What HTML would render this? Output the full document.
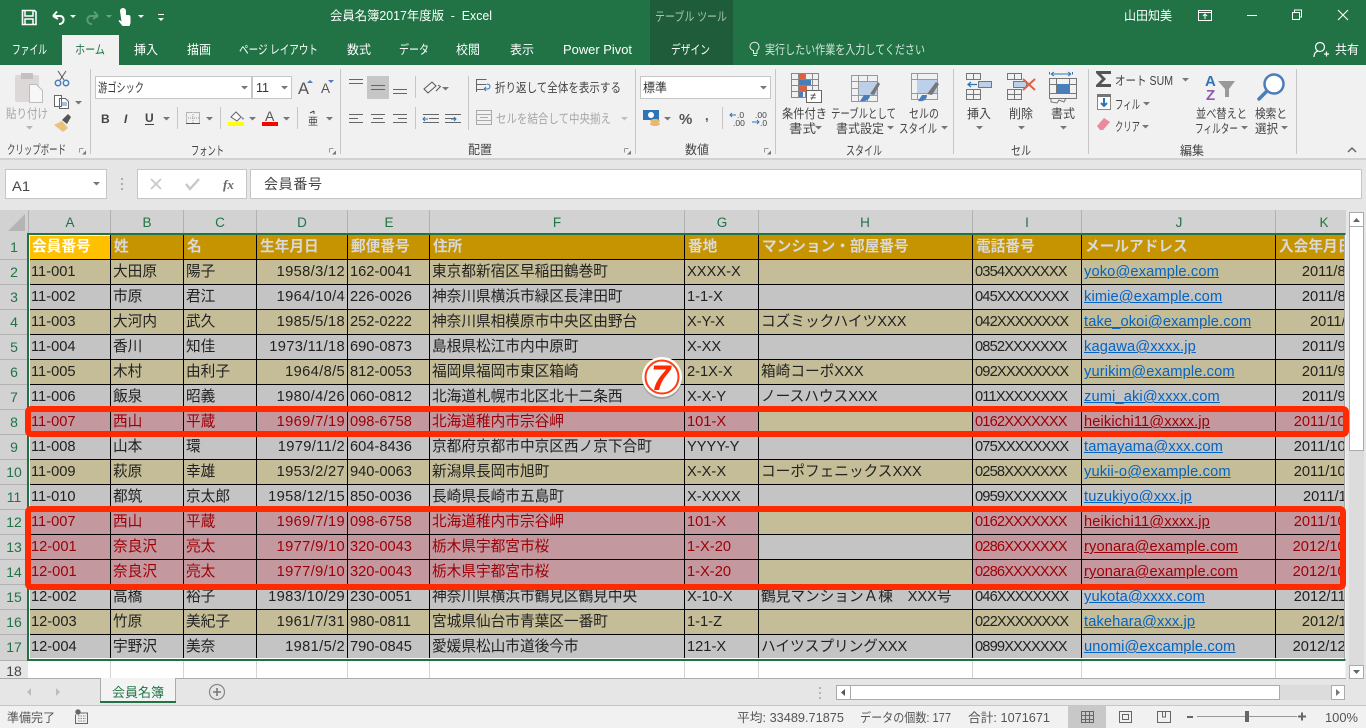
<!DOCTYPE html>
<html lang="ja"><head><meta charset="utf-8"><title>会員名簿2017年度版 - Excel</title>
<style>
html,body{margin:0;padding:0;width:1366px;height:728px;overflow:hidden;background:#f1f1f1}
svg{position:absolute;left:0;top:0;display:block}
svg text{font-family:"Liberation Sans","Noto Sans CJK JP",sans-serif;font-size:12.5px;fill:#444;white-space:pre}
.w text{fill:#fff}
.dis{fill:#a6a6a6 !important}
table{position:absolute;left:29px;top:235px;border-collapse:separate;border-spacing:0;table-layout:fixed;width:1316px;font-family:"Liberation Sans","Noto Sans CJK JP",sans-serif;font-size:14.67px;color:#222}
td{height:23px;padding:1px 0 0 2px;border-right:1px solid #000;border-bottom:1px solid #000;box-sizing:content-box;overflow:hidden;white-space:nowrap;line-height:23px;background:#c4c4c4}
tr.t td{background:#c4bd97}
tr.h td{background:#c69400;color:#d9d9d9;font-weight:bold;height:24px;line-height:24px;padding:0 0 0 3px}
tr.h td.a{background:#ffc000;color:#fff;box-shadow:inset 1px 1px 0 #fff}
tr.r td{background:#c4989f;color:#9c0006}
tr.r td.n{background:#c4c4c4}
tr.r.t td.n{background:#c4bd97}
td.d{text-align:right;padding:1px 2px 0 0;letter-spacing:.35px}
td.i{letter-spacing:-.85px;padding-left:2px}
td.m{letter-spacing:.12px;padding-left:2px}
td.m span{color:#0563c1;text-decoration:underline}
tr.r td.m span{color:#9c0006}
td.k{border-right:0;padding:1px 0 0 0}
td.k div{width:90px;text-align:right;letter-spacing:0}
tr.last td{border-bottom:0;height:22px;line-height:23px}
</style></head><body>
<svg width="1366" height="728" viewBox="0 0 1366 728">
<defs>
<path id="dd" d="M0 0h7l-3.500 3.500z" fill="#777"/>
<path id="dw" d="M0 0h6l-3 3z" fill="#fff"/>
<g id="lc"><path d="M.5 .5h4M.5 .5v4" stroke="#999" fill="none"/><path d="M3 6.500h4v-4z" fill="#777"/></g>
</defs>
<!-- title bar -->
<rect width="1366" height="65" fill="#217346"/>
<rect x="650" width="83" height="65" fill="#1e5c3a"/>
<rect x="62" y="35" width="57" height="30" fill="#f1f1f1"/>
<!-- ribbon -->
<rect y="65" width="1366" height="93" fill="#f1f1f1"/>
<rect y="158" width="1366" height="2" fill="#d2d2d2"/>
<rect y="160" width="1366" height="50" fill="#e6e6e6"/>
<!-- QAT -->
<g fill="none" stroke="#fff">
<path d="M22.500 10.500h12l1.500 1.500v12.500h-13.500z" stroke-width="1.600"/>
<path d="M25 11v5h8v-5M25 24v-5h8v5" stroke-width="1.500"/>
<path d="M53 16l4-4.500M53 16l5 3M53 16h7c5 0 5 8-1 8" stroke-width="2"/>
<path d="M98 16l-4-4.500M98 16l-5 3M98 16h-7c-5 0-5 8 1 8" stroke-width="2" stroke="#5f9b7b"/>
</g>
<path d="M120 11a3 3 0 0 1 6 0v4h2.500a2 2 0 0 1 2 2v6l-1 3h-7l-4-5 1-1 2 1.500z" fill="#fff"/>
<use href="#dw" x="70" y="15"/><use href="#dw" x="106" y="15" opacity=".35"/><use href="#dw" x="138" y="15"/>
<rect x="158" y="14" width="6" height="1" fill="#fff"/><use href="#dw" x="158" y="18"/>
<g class="w">
<text x="330" y="20" textLength="162" lengthAdjust="spacingAndGlyphs">会員名簿2017年度版  -  Excel</text>
<text x="1124" y="20" textLength="48" lengthAdjust="spacingAndGlyphs">山田知美</text>
<text x="12" y="54" textLength="35" lengthAdjust="spacingAndGlyphs">ファイル</text>
<text x="134" y="54" textLength="24" lengthAdjust="spacingAndGlyphs">挿入</text>
<text x="187" y="54" textLength="24" lengthAdjust="spacingAndGlyphs">描画</text>
<text x="239" y="54" textLength="79" lengthAdjust="spacingAndGlyphs">ページ レイアウト</text>
<text x="347" y="54" textLength="24" lengthAdjust="spacingAndGlyphs">数式</text>
<text x="399" y="54" textLength="30" lengthAdjust="spacingAndGlyphs">データ</text>
<text x="456" y="54" textLength="24" lengthAdjust="spacingAndGlyphs">校閲</text>
<text x="510" y="54" textLength="24" lengthAdjust="spacingAndGlyphs">表示</text>
<text x="563" y="54" textLength="69" lengthAdjust="spacingAndGlyphs">Power Pivot</text>
<text x="671" y="54" textLength="39" lengthAdjust="spacingAndGlyphs">デザイン</text>
<text x="765" y="54" textLength="160" lengthAdjust="spacingAndGlyphs" style="fill:#d5e5db">実行したい作業を入力してください</text>
<text x="1335" y="54" textLength="24" lengthAdjust="spacingAndGlyphs">共有</text>
<text x="655" y="21" textLength="72" lengthAdjust="spacingAndGlyphs" style="fill:#a9c6b5">テーブル ツール</text>
</g>
<text x="75" y="54" textLength="30" lengthAdjust="spacingAndGlyphs" style="fill:#217346">ホーム</text>
<!-- window controls -->
<g fill="none" stroke="#fff">
<path d="M1198.500 10.500h13v10h-13zM1198.500 12.500h13M1205 19v-5M1203 16l2-2 2 2"/>
<path d="M1247 15.500h10"/>
<path d="M1292.500 12.500h7v7h-7zM1294.500 12v-2h7v7h-2"/>
<path d="M1338 10l10 10M1348 10l-10 10" stroke-width="1.100"/>
<path d="M748 49a4.500 4.500 0 1 1 7 3.500v3h-3.500v-3a4.500 4.500 0 0 1-3.500-3.500zM751.500 57.500h3.500" stroke="#e8f0eb" transform="translate(2 -2)"/>
<circle cx="1320" cy="47" r="4.500" stroke-width="1.200"/><path d="M1314 57c0-4 2-5.500 4-6M1324 54h5M1326.500 51.500v5" stroke-width="1.200"/>
</g>
<!-- separators -->
<g fill="#c6c6c6">
<rect x="90" y="69" width="1" height="85"/><rect x="340" y="69" width="1" height="85"/><rect x="635" y="69" width="1" height="85"/><rect x="775" y="69" width="1" height="85"/><rect x="953" y="69" width="1" height="85"/><rect x="1088" y="69" width="1" height="85"/><rect x="1296" y="69" width="1" height="85"/>
<rect x="177" y="107" width="1" height="22"/><rect x="220" y="107" width="1" height="22"/><rect x="297" y="107" width="1" height="22"/><rect x="415" y="76" width="1" height="22"/><rect x="415" y="107" width="1" height="22"/><rect x="468" y="76" width="1" height="54"/><rect x="722" y="107" width="1" height="22"/>
</g>
<!-- clipboard -->
<rect x="15" y="75" width="24" height="27" rx="2" fill="#dcd8d8"/><rect x="21" y="73" width="12" height="6" fill="#c4c0c0"/>
<path d="M29.500 84.500h7l6 6v12h-13z" fill="#f7f7f7" stroke="#bdbdbd"/>
<text x="6" y="118" textLength="42" lengthAdjust="spacingAndGlyphs" class="dis">貼り付け</text>
<use href="#dd" x="26" y="126" opacity=".5"/>
<g fill="none" stroke="#555"><path d="M58 71l6 9M66 71l-6 9"/></g><g fill="none" stroke="#4a7ebb" stroke-width="1.500"><circle cx="58" cy="83" r="2.700"/><circle cx="66" cy="83" r="2.700"/></g>
<path d="M54.500 95.500h7v11h-7zM59.500 98.500h6l3 3v7h-9z" fill="#fff" stroke="#666"/><path d="M61 103h6M61 105h6" stroke="#4a7ebb"/>
<use href="#dd" x="75" y="101"/>
<path d="M54 125l8-4 6 7-5 4z" fill="#eac27e"/><path d="M62 120l6-6 3 3-4 7z" fill="#555"/>
<text x="7" y="154" textLength="59" lengthAdjust="spacingAndGlyphs">クリップボード</text><use href="#lc" x="79" y="148"/>
<!-- font -->
<rect x="95.500" y="76.500" width="156" height="22" fill="#fff" stroke="#c6c6c6"/><rect x="252.500" y="76.500" width="39" height="22" fill="#fff" stroke="#c6c6c6"/>
<text x="98" y="92" textLength="46" lengthAdjust="spacingAndGlyphs" style="fill:#333">游ゴシック</text><use href="#dd" x="241" y="86"/>
<text x="256" y="92" textLength="13" lengthAdjust="spacingAndGlyphs" style="fill:#333">11</text><use href="#dd" x="281" y="86"/>
<text x="298" y="94" style="font-size:16.500px;fill:#555">A</text><path d="M307 83h6l-3-3z" fill="#4a7ebb"/>
<text x="321" y="93" style="font-size:13.500px;fill:#555">A</text><path d="M328 80h6l-3 3z" fill="#4a7ebb"/>
<text x="101" y="123" style="font-weight:bold;font-size:12px;fill:#444">B</text>
<text x="124" y="123" style="font-style:italic;font-weight:bold;font-size:12px;fill:#444">I</text>
<text x="145" y="122" style="font-weight:bold;font-size:12px;fill:#444">U</text><rect x="145" y="124" width="9" height="1" fill="#444"/>
<use href="#dd" x="163" y="117"/>
<path d="M186.500 112.500h13v11h-13z" fill="none" stroke="#777" stroke-dasharray="1 1"/><path d="M193 112v12M186 118h14" stroke="#999" stroke-dasharray="1 1"/><rect x="186" y="123" width="14" height="1" fill="#555"/><use href="#dd" x="206" y="117"/>
<path d="M231 117l5-5 5 5-4 4z" fill="#fff" stroke="#666"/><path d="M241 117l3 1-1 2z" fill="#4a7ebb"/><rect x="228" y="122" width="16" height="4" fill="#ff0"/><use href="#dd" x="249" y="117"/>
<text x="265" y="121" style="font-size:14px;fill:#555">A</text><rect x="262" y="122" width="16" height="4" fill="#f00"/><use href="#dd" x="283" y="117"/>
<text x="308" y="125" style="font-size:10px;fill:#444">亜</text><path d="M310 113l4-2M314 111v3" stroke="#444" fill="none"/><use href="#dd" x="326" y="117"/>
<text x="191" y="155" textLength="33" lengthAdjust="spacingAndGlyphs">フォント</text><use href="#lc" x="329" y="148"/>
<!-- alignment -->
<rect x="367" y="76" width="22" height="23" fill="#c6c6c6"/>
<path d="M349 79.500h14M349 83.500h14M371 85.500h14M371 89.500h14M393 89.500h14M393 93.500h14M349 114.500h14M349 118.500h9M349 122.500h14M371 114.500h14M373 118.500h10M371 122.500h14M393 114.500h14M398 118.500h9M393 122.500h14M423 114.500h16M429 118.500h10M423 122.500h16M445 114.500h16M445 118.500h10M445 122.500h16" stroke="#666" fill="none"/>
<path d="M428 119h-5M425 117l-2 2 2 2" stroke="#2e75b6" fill="none"/><path d="M451 119h5M454 117l2 2-2 2" stroke="#2e75b6" fill="none"/>
<g fill="none" stroke="#555"><path d="M424 89l8-7 4 4-8 7zM436 91l4-4M438 85l3 2"/></g><use href="#dd" x="442" y="87"/>
<path d="M476.500 79.500h10M476.500 84.500h10M476.500 89.500h7M476.500 79v13" stroke="#666" fill="none"/><path d="M487 84c4 0 4 5 0 5h-2M486 87l-2 2 2 2" stroke="#2e75b6" fill="none"/>
<text x="495" y="92" textLength="126" lengthAdjust="spacingAndGlyphs">折り返して全体を表示する</text>
<path d="M476.500 110.500h15v14h-15zM476.500 114.500h15M476.500 120.500h15M480 117.500h8" stroke="#aaa" fill="none"/>
<text x="496" y="123" textLength="115" lengthAdjust="spacingAndGlyphs" class="dis">セルを結合して中央揃え</text><use href="#dd" x="621" y="117" opacity=".4"/>
<text x="468" y="154" textLength="24" lengthAdjust="spacingAndGlyphs">配置</text><use href="#lc" x="624" y="148"/>
<!-- number -->
<rect x="640.500" y="76.500" width="130" height="22" fill="#fff" stroke="#c6c6c6"/><text x="643" y="92" textLength="24" lengthAdjust="spacingAndGlyphs" style="fill:#333">標準</text><use href="#dd" x="760" y="86"/>
<rect x="643" y="110" width="16" height="10" fill="#2e75b6"/><circle cx="651" cy="115" r="3" fill="#fff"/><ellipse cx="655" cy="121" rx="5" ry="2" fill="#e9b76d"/><ellipse cx="655" cy="124" rx="5" ry="2" fill="#e9b76d"/><use href="#dd" x="664" y="117"/>
<text x="679" y="124" style="font-size:15px;font-weight:bold;fill:#555">%</text>
<text x="705" y="120" style="font-size:13px;font-weight:bold;fill:#555">,</text>
<text x="737" y="118" style="font-size:8.500px;fill:#444">.0</text><text x="733" y="126" style="font-size:8.500px;fill:#444">.00</text><path d="M736 115h-6M732 113l-2 2 2 2" stroke="#2e75b6" fill="none"/>
<text x="755" y="118" style="font-size:8.500px;fill:#444">.00</text><text x="760" y="126" style="font-size:8.500px;fill:#444">.0</text><path d="M752 122h7M757 120l2 2-2 2" stroke="#2e75b6" fill="none"/>
<text x="685" y="154" textLength="24" lengthAdjust="spacingAndGlyphs">数値</text><use href="#lc" x="764" y="148"/>
<!-- styles -->
<g fill="none" stroke="#888"><path d="M791.500 73.500h27v24h-27zM791.500 79.500h27M791.500 85.500h27M791.500 91.500h27M798.500 73v24M805.500 73v24M812.500 73v24"/></g>
<rect x="799" y="74" width="6" height="5" fill="#dc6141"/><rect x="799" y="80" width="12" height="5" fill="#4a7ebb"/><rect x="799" y="86" width="8" height="5" fill="#dc6141"/><rect x="799" y="92" width="4" height="5" fill="#4a7ebb"/>
<rect x="806.500" y="90.500" width="15" height="12" fill="#fff" stroke="#666"/><text x="810" y="100" style="font-size:11px;fill:#333">≠</text>
<text x="782" y="118" textLength="45" lengthAdjust="spacingAndGlyphs">条件付き</text><text x="789" y="133" textLength="27" lengthAdjust="spacingAndGlyphs">書式</text><use href="#dd" x="815" y="126"/>
<g fill="none" stroke="#999"><path d="M851.500 75.500h26v26h-26zM851.500 81.500h26M851.500 88.500h26M851.500 95.500h26M858.500 75v26M867.500 75v26"/></g><rect x="859" y="82" width="18" height="13" fill="#bdd0e9"/>
<path d="M860 101l4-6 6 0c0 5-5 7-10 6z" fill="#4a7ebb"/><path d="M870 94l8-12 2 2-6 11z" fill="#777"/>
<text x="831" y="118" textLength="65" lengthAdjust="spacingAndGlyphs">テーブルとして</text><text x="836" y="133" textLength="48" lengthAdjust="spacingAndGlyphs">書式設定</text><use href="#dd" x="887" y="126"/>
<g fill="none" stroke="#999"><path d="M911.500 73.500h26v26h-26zM911.500 79.500h26M911.500 93.500h26M917.500 73v26"/></g><rect x="917" y="80" width="20" height="13" fill="#bdd0e9"/>
<path d="M918 101l4-6 5 0c0 5-4 7-9 6z" fill="#4a7ebb"/><path d="M927 94l9-12 3 2-7 11z" fill="#777"/>
<text x="909" y="118" textLength="30" lengthAdjust="spacingAndGlyphs">セルの</text><text x="899" y="133" textLength="38" lengthAdjust="spacingAndGlyphs">スタイル</text><use href="#dd" x="941" y="126"/>
<text x="846" y="155" textLength="36" lengthAdjust="spacingAndGlyphs">スタイル</text>
<!-- cells -->
<g fill="none" stroke="#777"><path d="M966.500 73.500h14v6h-14zM973.500 73v6M978.500 81.500h13v6h-13zM985.500 81v6M966.500 89.500h14v10h-14zM966.500 94.500h14M973.500 89v10"/></g><rect x="979" y="82" width="12" height="5" fill="#bdd0e9"/><path d="M977 84.500h-9M971 82l-3 2.500 3 2.500" stroke="#2e75b6" fill="none" stroke-width="1.300"/>
<text x="967" y="118" textLength="24" lengthAdjust="spacingAndGlyphs">挿入</text><use href="#dd" x="976" y="126"/>
<g fill="none" stroke="#777"><path d="M1007.500 73.500h14v6h-14zM1014.500 73v6M1013.500 81.500h13v6h-13zM1007.500 89.500h14v10h-14zM1007.500 94.500h14M1014.500 89v10"/></g><rect x="1014" y="82" width="12" height="5" fill="#bdd0e9"/>
<path d="M1023 79l12 11M1035 79l-12 11" stroke="#dc6141" stroke-width="2" fill="none"/>
<text x="1009" y="118" textLength="24" lengthAdjust="spacingAndGlyphs">削除</text><use href="#dd" x="1018" y="126"/>
<path d="M1050 74h-.5v-2M1072 74h.5v-2M1051 74h20M1051 74l3-2M1051 74l3 2M1071 74l-3-2M1071 74l-3 2" stroke="#2e75b6" fill="none"/>
<g fill="none" stroke="#777"><path d="M1049.500 78.500h27v20h-27zM1049.500 84.500h27M1049.500 93.500h27M1056.500 78v16M1069.500 78v16M1051 98v4l6 1 2-3 5 2 2-4"/></g><rect x="1057" y="84" width="12" height="9" fill="#4a7ebb"/>
<text x="1051" y="118" textLength="24" lengthAdjust="spacingAndGlyphs">書式</text><use href="#dd" x="1060" y="126"/>
<text x="1011" y="155" textLength="20" lengthAdjust="spacingAndGlyphs">セル</text>
<!-- editing -->
<path d="M1096 71h15v3h-10l5 5-5 5h10v3h-15v-2l6-6-6-6z" fill="#555"/>
<text x="1115" y="85" textLength="58" lengthAdjust="spacingAndGlyphs">オート SUM</text><use href="#dd" x="1182" y="78"/>
<rect x="1097.500" y="94.500" width="13" height="15" fill="#fff" stroke="#888"/><rect x="1097" y="94" width="14" height="3" fill="#777"/><path d="M1104 98v8M1101 103l3 3 3-3" stroke="#2e75b6" stroke-width="2" fill="none"/>
<text x="1115" y="109" textLength="25" lengthAdjust="spacingAndGlyphs">フィル</text><use href="#dd" x="1143" y="102"/>
<path d="M1097 126l7-8 6 4-7 8h-3z" fill="#ea8a9c"/>
<text x="1115" y="131" textLength="25" lengthAdjust="spacingAndGlyphs">クリア</text><use href="#dd" x="1142" y="125"/>
<text x="1180" y="155" textLength="24" lengthAdjust="spacingAndGlyphs">編集</text>
<text x="1205" y="86" style="font-size:15px;font-weight:bold;fill:#2e75b6">A</text><text x="1206" y="100" style="font-size:15px;font-weight:bold;fill:#8e5bb5">Z</text>
<path d="M1218 81h17l-6 8v8h-4v-8z" fill="#999"/>
<text x="1196" y="118" textLength="51" lengthAdjust="spacingAndGlyphs">並べ替えと</text><text x="1195" y="133" textLength="43" lengthAdjust="spacingAndGlyphs">フィルター</text><use href="#dd" x="1241" y="126"/>
<circle cx="1274" cy="84" r="9.500" fill="#fff" stroke="#4a7ebb" stroke-width="2.500"/><path d="M1266 92l-7 7" stroke="#4a7ebb" stroke-width="3.500" stroke-linecap="round"/>
<text x="1255" y="118" textLength="32" lengthAdjust="spacingAndGlyphs">検索と</text><text x="1255" y="133" textLength="23" lengthAdjust="spacingAndGlyphs">選択</text><use href="#dd" x="1281" y="126"/>
<path d="M1348 152l4-4 4 4" stroke="#666" stroke-width="1.500" fill="none"/>
<!-- formula bar -->
<rect x="5.500" y="169.500" width="101" height="29" fill="#fff" stroke="#c6c6c6"/>
<text x="12" y="191" textLength="18" lengthAdjust="spacingAndGlyphs" style="font-size:14px;fill:#444">A1</text>
<path d="M93 182h7l-3.500 3.500z" fill="#777"/>
<g fill="#aaa"><rect x="121" y="178" width="2" height="2"/><rect x="121" y="183" width="2" height="2"/><rect x="121" y="188" width="2" height="2"/></g>
<rect x="137.500" y="169.500" width="109" height="29" fill="#fff" stroke="#c6c6c6"/>
<path d="M151 179l10 10M161 179l-10 10" stroke="#c8c8c8" stroke-width="1.700" fill="none"/>
<path d="M186 184l4 5 9-10" stroke="#c8c8c8" stroke-width="2.400" fill="none"/>
<text x="223" y="189" style="font-family:'Liberation Serif',serif;font-style:italic;font-weight:bold;font-size:13px;fill:#666">fx</text>
<rect x="250.500" y="169.500" width="1111" height="29" fill="#fff" stroke="#c6c6c6"/>
<text x="264" y="189" textLength="58" style="font-size:14px;fill:#444">会員番号</text>
<!-- sheet frame -->
<rect y="210" width="1346" height="24" fill="#d2d2d2"/>
<rect y="234" width="28" height="427" fill="#d2d2d2"/>
<rect y="661" width="28" height="18" fill="#e6e6e6"/>
<rect x="28" y="661" width="1317" height="17" fill="#fff"/>
<path d="M8 231h17v-17z" fill="#b4b4b4"/>
<path d="M28.500 210v24M110.500 210v24M183.500 210v24M256.500 210v24M347.500 210v24M429.500 210v24M684.500 210v24M758.500 210v24M972.500 210v24M1081.500 210v24M1275.500 210v24" stroke="#b1b1b1"/>
<path d="M0 259.500h28M0 284.500h28M0 309.500h28M0 334.500h28M0 359.500h28M0 384.500h28M0 409.500h28M0 434.500h28M0 459.500h28M0 484.500h28M0 509.500h28M0 534.500h28M0 559.500h28M0 584.500h28M0 609.500h28M0 634.500h28M0 660.500h28" stroke="#b1b1b1"/>
<path d="M110.500 661v17M183.500 661v17M256.500 661v17M347.500 661v17M429.500 661v17M684.500 661v17M758.500 661v17M972.500 661v17M1081.500 661v17M1275.500 661v17" stroke="#d4d4d4"/>
<g style="text-anchor:middle">
<text x="70" y="227" style="font-size:13.500px;fill:#217346">A</text><text x="147" y="227" style="font-size:13.500px;fill:#217346">B</text><text x="220" y="227" style="font-size:13.500px;fill:#217346">C</text><text x="302" y="227" style="font-size:13.500px;fill:#217346">D</text><text x="389" y="227" style="font-size:13.500px;fill:#217346">E</text><text x="557" y="227" style="font-size:13.500px;fill:#217346">F</text><text x="722" y="227" style="font-size:13.500px;fill:#217346">G</text><text x="865" y="227" style="font-size:13.500px;fill:#217346">H</text><text x="1027" y="227" style="font-size:13.500px;fill:#217346">I</text><text x="1179" y="227" style="font-size:13.500px;fill:#217346">J</text><text x="1324" y="227" style="font-size:13.500px;fill:#217346">K</text>
<text x="14" y="252" style="font-size:14px;fill:#217346">1</text><text x="14" y="277" style="font-size:14px;fill:#217346">2</text><text x="14" y="302" style="font-size:14px;fill:#217346">3</text><text x="14" y="327" style="font-size:14px;fill:#217346">4</text><text x="14" y="352" style="font-size:14px;fill:#217346">5</text><text x="14" y="377" style="font-size:14px;fill:#217346">6</text><text x="14" y="402" style="font-size:14px;fill:#217346">7</text><text x="14" y="427" style="font-size:14px;fill:#217346">8</text><text x="14" y="452" style="font-size:14px;fill:#217346">9</text><text x="14" y="477" style="font-size:14px;fill:#217346">10</text><text x="14" y="502" style="font-size:14px;fill:#217346">11</text><text x="14" y="527" style="font-size:14px;fill:#217346">12</text><text x="14" y="552" style="font-size:14px;fill:#217346">13</text><text x="14" y="577" style="font-size:14px;fill:#217346">14</text><text x="14" y="602" style="font-size:14px;fill:#217346">15</text><text x="14" y="627" style="font-size:14px;fill:#217346">16</text><text x="14" y="652" style="font-size:14px;fill:#217346">17</text><text x="14" y="676" style="font-size:14px;fill:#444">18</text>
</g>
<!-- vertical scrollbar -->
<rect x="1346" y="210" width="20" height="496" fill="#e6e6e6"/>
<rect x="1349" y="212" width="15" height="454" fill="#dcdcdc"/>
<rect x="1349.500" y="212.500" width="14" height="238" fill="#fff" stroke="#ababab"/>
<rect x="1349.500" y="212.500" width="14" height="14" fill="#fff" stroke="#ababab"/>
<path d="M1353 222h7l-3.500-4z" fill="#666"/>
<rect x="1349.500" y="665.500" width="14" height="13" fill="#fff" stroke="#ababab"/>
<path d="M1353 670h7l-3.500 4z" fill="#666"/>
<!-- tabs bar -->
<rect y="678" width="1346" height="1" fill="#ababab"/>
<rect y="679" width="1346" height="27" fill="#e6e6e6"/>
<rect y="706" width="1366" height="22" fill="#f1f1f1"/>
<rect y="705" width="1366" height="1" fill="#c6c6c6"/>
<path d="M31 688v8l-4-4zM56 688v8l4-4z" fill="#bcbcbc"/>
<path d="M100.500 702v-24M175.500 702v-24" stroke="#ababab"/><rect x="101" y="678" width="74" height="23" fill="#f3f3f3"/><rect x="100" y="701" width="76" height="2" fill="#217346"/>
<text x="112" y="697" textLength="52" style="font-size:13px;fill:#217346">会員名簿</text>
<circle cx="217" cy="692" r="7.500" fill="none" stroke="#888" stroke-width="1.200"/><path d="M213 692h8M217 688v8" stroke="#777" stroke-width="1.600"/>
<g fill="#b4b4b4"><rect x="819" y="687" width="2" height="2"/><rect x="819" y="692" width="2" height="2"/><rect x="819" y="697" width="2" height="2"/></g>
<rect x="836.500" y="685.500" width="14" height="14" fill="#fff" stroke="#ababab"/><path d="M845 689v7l-4-3.500z" fill="#555"/>
<rect x="850.500" y="685.500" width="429" height="14" fill="#fff" stroke="#ababab"/>
<rect x="1280" y="685" width="51" height="15" fill="#dcdcdc"/>
<rect x="1331.500" y="685.500" width="13" height="14" fill="#fff" stroke="#ababab"/><path d="M1336 689v7l4-3.500z" fill="#777"/>
<!-- status -->
<text x="7" y="722" textLength="48" lengthAdjust="spacingAndGlyphs" style="fill:#555">準備完了</text>
<circle cx="78" cy="712" r="2.700" fill="#666"/><path d="M76 713h11.500v10.500h-12v-9" fill="none" stroke="#666"/><path d="M78 716h8M78 718.500h8M78 721h8" stroke="#888" stroke-dasharray="1.500 1" fill="none"/>
<text x="737" y="722" textLength="107" lengthAdjust="spacingAndGlyphs" style="fill:#555">平均: 33489.71875</text>
<text x="860" y="722" textLength="91" lengthAdjust="spacingAndGlyphs" style="fill:#555">データの個数: 177</text>
<text x="968" y="722" textLength="82" lengthAdjust="spacingAndGlyphs" style="fill:#555">合計: 1071671</text>
<rect x="1068" y="706" width="38" height="22" fill="#c8c8c8"/>
<g fill="none" stroke="#666"><path d="M1081.500 711.500h12v11h-12zM1081.500 715.500h12M1081.500 719.500h12M1085.500 711v11M1089.500 711v11"/>
<path d="M1119.500 711.500h12v11h-12zM1122.500 714.500h6v5h-6z"/><path d="M1157.500 711.500h13v11h-13zM1162.500 711v6h3v-6"/></g>
<rect x="1187" y="716" width="6" height="2" fill="#666"/>
<rect x="1197" y="716" width="100" height="1" fill="#999"/><rect x="1245" y="711" width="4" height="11" fill="#666"/>
<path d="M1298 716.500h8M1302 712.500v8" stroke="#666" stroke-width="2"/>
<text x="1325" y="722" textLength="33" lengthAdjust="spacingAndGlyphs" style="fill:#555">100%</text>
</svg>

<table><colgroup><col style="width:82px"><col style="width:73px"><col style="width:73px"><col style="width:91px"><col style="width:82px"><col style="width:255px"><col style="width:74px"><col style="width:214px"><col style="width:109px"><col style="width:194px"><col style="width:69px"></colgroup>
<tr class="h"><td class="a">会員番号</td><td>姓</td><td>名</td><td>生年月日</td><td>郵便番号</td><td>住所</td><td>番地</td><td>マンション・部屋番号</td><td>電話番号</td><td>メールアドレス</td><td style="border-right:0">入会年月日</td></tr>
<tr class="t"><td>11-001</td><td>大田原</td><td>陽子</td><td class="d">1958/3/12</td><td>162-0041</td><td>東京都新宿区早稲田鶴巻町</td><td>XXXX-X</td><td></td><td class="i">0354XXXXXXX</td><td class="m"><span>yoko@example.com</span></td><td class="k"><div>2011/8/15</div></td></tr>
<tr><td>11-002</td><td>市原</td><td>君江</td><td class="d">1964/10/4</td><td>226-0026</td><td>神奈川県横浜市緑区長津田町</td><td>1-1-X</td><td></td><td class="i">045XXXXXXXX</td><td class="m"><span>kimie@example.com</span></td><td class="k"><div>2011/8/20</div></td></tr>
<tr class="t"><td>11-003</td><td>大河内</td><td>武久</td><td class="d">1985/5/18</td><td>252-0222</td><td>神奈川県相模原市中央区由野台</td><td>X-Y-X</td><td>コズミックハイツXXX</td><td class="i">042XXXXXXXX</td><td class="m"><span>take_okoi@example.com</span></td><td class="k"><div>2011/4/1</div></td></tr>
<tr><td>11-004</td><td>香川</td><td>知佳</td><td class="d">1973/11/18</td><td>690-0873</td><td>島根県松江市内中原町</td><td>X-XX</td><td></td><td class="i">0852XXXXXXX</td><td class="m"><span>kagawa@xxxx.jp</span></td><td class="k"><div>2011/9/10</div></td></tr>
<tr class="t"><td>11-005</td><td>木村</td><td>由利子</td><td class="d">1964/8/5</td><td>812-0053</td><td>福岡県福岡市東区箱崎</td><td>2-1X-X</td><td>箱崎コーポXXX</td><td class="i">092XXXXXXXX</td><td class="m"><span>yurikim@example.com</span></td><td class="k"><div>2011/9/15</div></td></tr>
<tr><td>11-006</td><td>飯泉</td><td>昭義</td><td class="d">1980/4/26</td><td>060-0812</td><td>北海道札幌市北区北十二条西</td><td>X-X-Y</td><td>ノースハウスXXX</td><td class="i">011XXXXXXXX</td><td class="m"><span>zumi_aki@xxxx.com</span></td><td class="k"><div>2011/9/20</div></td></tr>
<tr class="r t"><td>11-007</td><td>西山</td><td>平蔵</td><td class="d">1969/7/19</td><td>098-6758</td><td>北海道稚内市宗谷岬</td><td>101-X</td><td class="n"></td><td class="i">0162XXXXXXX</td><td class="m"><span>heikichi11@xxxx.jp</span></td><td class="k"><div>2011/10/15</div></td></tr>
<tr><td>11-008</td><td>山本</td><td>環</td><td class="d">1979/11/2</td><td>604-8436</td><td>京都府京都市中京区西ノ京下合町</td><td>YYYY-Y</td><td></td><td class="i">075XXXXXXXX</td><td class="m"><span>tamayama@xxx.com</span></td><td class="k"><div>2011/10/15</div></td></tr>
<tr class="t"><td>11-009</td><td>萩原</td><td>幸雄</td><td class="d">1953/2/27</td><td>940-0063</td><td>新潟県長岡市旭町</td><td>X-X-X</td><td>コーポフェニックスXXX</td><td class="i">0258XXXXXXX</td><td class="m"><span>yukii-o@example.com</span></td><td class="k"><div>2011/10/20</div></td></tr>
<tr><td>11-010</td><td>都筑</td><td>京太郎</td><td class="d">1958/12/15</td><td>850-0036</td><td>長崎県長崎市五島町</td><td>X-XXXX</td><td></td><td class="i">0959XXXXXXX</td><td class="m"><span>tuzukiyo@xxx.jp</span></td><td class="k"><div>2011/11/1</div></td></tr>
<tr class="r t"><td>11-007</td><td>西山</td><td>平蔵</td><td class="d">1969/7/19</td><td>098-6758</td><td>北海道稚内市宗谷岬</td><td>101-X</td><td class="n"></td><td class="i">0162XXXXXXX</td><td class="m"><span>heikichi11@xxxx.jp</span></td><td class="k"><div>2011/10/15</div></td></tr>
<tr class="r"><td>12-001</td><td>奈良沢</td><td>亮太</td><td class="d">1977/9/10</td><td>320-0043</td><td>栃木県宇都宮市桜</td><td>1-X-20</td><td class="n"></td><td class="i">0286XXXXXXX</td><td class="m"><span>ryonara@example.com</span></td><td class="k"><div>2012/10/10</div></td></tr>
<tr class="r t"><td>12-001</td><td>奈良沢</td><td>亮太</td><td class="d">1977/9/10</td><td>320-0043</td><td>栃木県宇都宮市桜</td><td>1-X-20</td><td class="n"></td><td class="i">0286XXXXXXX</td><td class="m"><span>ryonara@example.com</span></td><td class="k"><div>2012/10/10</div></td></tr>
<tr><td>12-002</td><td>高橋</td><td>裕子</td><td class="d">1983/10/29</td><td>230-0051</td><td>神奈川県横浜市鶴見区鶴見中央</td><td>X-10-X</td><td>鶴見マンションＡ棟　XXX号</td><td class="i">046XXXXXXXX</td><td class="m"><span>yukota@xxxx.com</span></td><td class="k"><div>2012/11/15</div></td></tr>
<tr class="t"><td>12-003</td><td>竹原</td><td>美紀子</td><td class="d">1961/7/31</td><td>980-0811</td><td>宮城県仙台市青葉区一番町</td><td>1-1-Z</td><td></td><td class="i">022XXXXXXXX</td><td class="m"><span>takehara@xxx.jp</span></td><td class="k"><div>2012/11/1</div></td></tr>
<tr class="last"><td>12-004</td><td>宇野沢</td><td>美奈</td><td class="d">1981/5/2</td><td>790-0845</td><td>愛媛県松山市道後今市</td><td>121-X</td><td>ハイツスプリングXXX</td><td class="i">0899XXXXXXX</td><td class="m"><span>unomi@excample.com</span></td><td class="k"><div>2012/12/15</div></td></tr>
</table>

<svg width="1366" height="728" viewBox="0 0 1366 728" style="pointer-events:none">
<!-- selection -->
<path d="M28 234h1317.500M28 660h1317.500" stroke="#217346" stroke-width="2" fill="none"/>
<path d="M28 233v428" stroke="#217346" stroke-width="2" fill="none"/>
<rect x="29" y="235" width="1" height="424" fill="#fff"/>
<rect x="29" y="658" width="1316" height="1" fill="#fff"/>
<rect x="1344" y="235" width="1" height="424" fill="#a6a6a6"/>
<!-- red boxes -->
<rect x="28" y="409" width="1318" height="25" rx="3" fill="none" stroke="#ff2a00" stroke-width="6"/>
<rect x="28" y="509" width="1315" height="78" rx="3" fill="none" stroke="#ff2a00" stroke-width="6"/>
<!-- number badge -->
<circle cx="662" cy="379" r="20" fill="#000" opacity=".18"/>
<circle cx="662" cy="377" r="20" fill="#fff"/>
<circle cx="662" cy="377" r="16.500" fill="#fff" stroke="#ff3d14" stroke-width="2"/>
<text x="651" y="390" style="font-size:35px;font-weight:bold;font-style:italic;fill:#ff2a00">7</text>
</svg>
</body></html>
